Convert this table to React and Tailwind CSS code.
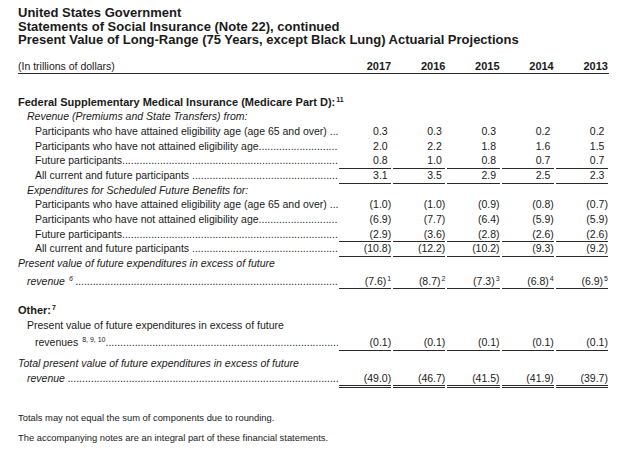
const font = "font-['Liberation_Sans',Arial,sans-serif]";

const Sup = ({ children }) => (
  <sup className="text-[7px] -top-[4px] ml-[1px]">{children}</sup>
);

const Dots = () => (
  <span className="flex-1 overflow-hidden whitespace-nowrap">{".".repeat(160)}</span>
);

const Cell = ({ v, line }) => {
  const val = typeof v === "string" ? { n: v } : v;
  const paren = val.n.startsWith("(");
  let border = "";
  if (line === "single") border = "border-b border-[#2a2a2a]";
  if (line === "double") border = "border-b-[3px] border-double border-[#2a2a2a]";
  return (
    <div className="w-[54.2px] shrink-0 flex items-start">
      <div
        className={`box-content h-[14.7px] flex-1 ml-[1px] mr-[1px] text-right whitespace-nowrap ${border} ${paren ? "" : "pr-[3.5px]"}`}
      >
        {val.n}
        {val.s && <Sup>{val.s}</Sup>}
      </div>
    </div>
  );
};

const Row = ({ label, indent = 0, italic, bold, values, line, dots = true, className = "" }) => (
  <div className={`flex items-start h-[14.7px] leading-[14.7px] ${className}`}>
    <div
      className={`w-[320px] shrink-0 flex ${italic ? "italic" : ""} ${bold ? "font-bold text-[11px]" : ""}`}
      style={{ paddingLeft: indent }}
    >
      <span className="whitespace-pre">{label}</span>
      {dots && values && <Dots />}
    </div>
    {values && values.map((v, i) => <Cell key={i} v={v} line={line} />)}
  </div>
);

export default function App() {
  return (
    <div className={`w-[640px] h-[462px] bg-white text-[#1a1a1a] pl-[18px] pt-[6px] ${font}`}>
      <div className="text-[13px] font-bold leading-[13.5px]">
        <div>United States Government</div>
        <div>Statements of Social Insurance (Note 22), continued</div>
        <div>Present Value of Long-Range (75 Years, except Black Lung) Actuarial Projections</div>
      </div>

      <div className="mt-[13px] w-[591px] flex leading-[13px] border-b border-[#2a2a2a]">
        <div className="w-[320px] shrink-0 text-[10.5px]">(In trillions of dollars)</div>
        {["2017", "2016", "2015", "2014", "2013"].map((y) => (
          <div key={y} className="w-[54.2px] shrink-0 text-right pr-[1px] text-[11px] font-bold">
            {y}
          </div>
        ))}
      </div>

      <div className="text-[10.5px] mt-[21px]">
        <Row
          bold
          label={
            <>
              Federal Supplementary Medical Insurance (Medicare Part D):<Sup>11</Sup>
            </>
          }
        />
        <Row italic indent={9} label="Revenue (Premiums and State Transfers) from:" />
        <Row indent={17} label="Participants who have attained eligibility age (age 65 and over) " values={["0.3", "0.3", "0.3", "0.2", "0.2"]} />
        <Row indent={17} label="Participants who have not attained eligibility age" values={["2.0", "2.2", "1.8", "1.6", "1.5"]} />
        <Row indent={17} label="Future participants" values={["0.8", "1.0", "0.8", "0.7", "0.7"]} line="single" />
        <Row indent={17} label="All current and future participants " values={["3.1", "3.5", "2.9", "2.5", "2.3"]} line="single" />
        <Row italic indent={9} label="Expenditures for Scheduled Future Benefits for:" />
        <Row indent={17} label="Participants who have attained eligibility age (age 65 and over) " values={["(1.0)", "(1.0)", "(0.9)", "(0.8)", "(0.7)"]} />
        <Row indent={17} label="Participants who have not attained eligibility age" values={["(6.9)", "(7.7)", "(6.4)", "(5.9)", "(5.9)"]} />
        <Row indent={17} label="Future participants" values={["(2.9)", "(3.6)", "(2.8)", "(2.6)", "(2.6)"]} line="single" />
        <Row indent={17} label="All current and future participants " values={["(10.8)", "(12.2)", "(10.2)", "(9.3)", "(9.2)"]} line="single" />
        <Row italic label="Present value of future expenditures in excess of future" />
        <Row
          italic
          indent={9}
          className="mt-[3px]"
          label={
            <>
              revenue <Sup>6</Sup>{" "}
            </>
          }
          values={[
            { n: "(7.6)", s: "1" },
            { n: "(8.7)", s: "2" },
            { n: "(7.3)", s: "3" },
            { n: "(6.8)", s: "4" },
            { n: "(6.9)", s: "5" },
          ]}
          line="single"
        />

        <Row
          bold
          className="mt-[15px]"
          label={
            <>
              Other:<Sup>7</Sup>
            </>
          }
        />
        <Row indent={9} label="Present value of future expenditures in excess of future" />
        <Row
          indent={17}
          className="mt-[2.6px]"
          label={
            <>
              revenues <Sup>8, 9, 10</Sup>
            </>
          }
          values={["(0.1)", "(0.1)", "(0.1)", "(0.1)", "(0.1)"]}
          line="single"
        />
        <Row italic className="mt-[6px]" label="Total present value of future expenditures in excess of future" />
        <Row
          italic
          indent={9}
          label="revenue "
          values={["(49.0)", "(46.7)", "(41.5)", "(41.9)", "(39.7)"]}
          line="double"
        />
      </div>

      <div className="text-[9.4px] leading-[12px] mt-[27px]">
        Totals may not equal the sum of components due to rounding.
      </div>
      <div className="text-[9.4px] leading-[12px] mt-[8px]">
        The accompanying notes are an integral part of these financial statements.
      </div>
    </div>
  );
}
